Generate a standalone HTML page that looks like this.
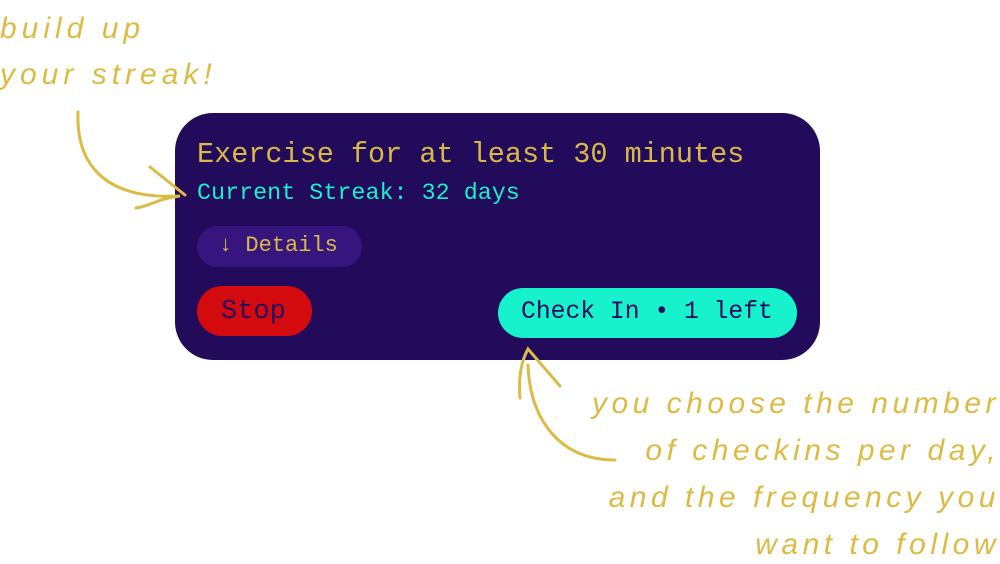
<!DOCTYPE html>
<html><head><style>
body{margin:0;width:1000px;height:564px;background:#fff;position:relative;overflow:hidden;font-family:"Liberation Mono",monospace}
.h{position:absolute;color:#dcbb44;font-family:"Liberation Sans",sans-serif;font-size:30px;letter-spacing:4.5px;font-style:italic;white-space:nowrap;line-height:34px}
.card{position:absolute;left:175px;top:113px;width:645px;height:247px;background:#230b5b;border-radius:38px}
.t{position:absolute;white-space:nowrap}
</style></head><body>
<div class="h" style="left:0;top:12px;letter-spacing:5px">build up</div>
<div class="h" style="left:0;top:58px;letter-spacing:5px">your streak!</div>
<div class="card"></div>
<div class="t" style="left:197px;top:138px;font-size:28.5px;color:#d9b945">Exercise for at least 30 minutes</div>
<div class="t" style="left:197px;top:181px;font-size:23.4px;color:#17f2cc">Current Streak: 32 days</div>
<div style="position:absolute;left:197px;top:226px;width:165px;height:41px;border-radius:21px;background:#37157f"></div>
<div class="t" style="left:219px;top:233px;font-size:22px;color:#d9b945">↓ Details</div>
<div style="position:absolute;left:197px;top:286px;width:115px;height:50px;border-radius:25px;background:#d40b0e"></div>
<div class="t" style="left:221px;top:297px;font-size:27px;color:#2a0b5e">Stop</div>
<div style="position:absolute;left:498px;top:288px;width:299px;height:50px;border-radius:25px;background:#17f2cc"></div>
<div class="t" style="left:521px;top:298px;font-size:24.7px;color:#230b5b">Check In • 1 left</div>
<svg style="position:absolute;left:0;top:0" width="1000" height="564" fill="none" stroke="#dcbb44" stroke-width="3" stroke-linecap="round">
<path d="M78 112 C76 160 100 200 180 196 C160 198 150 206 136 208"/>
<path d="M150 167 L185 195"/>
<path d="M615 460 C560 460 530 420 528 365 M520 398 C518 375 522 360 528 349 L560 386"/>
</svg>
<div class="h" style="right:0;top:387px">you choose the number</div>
<div class="h" style="right:0;top:434px">of checkins per day,</div>
<div class="h" style="right:0;top:481px">and the frequency you</div>
<div class="h" style="right:0;top:528px">want to follow</div>
</body></html>
